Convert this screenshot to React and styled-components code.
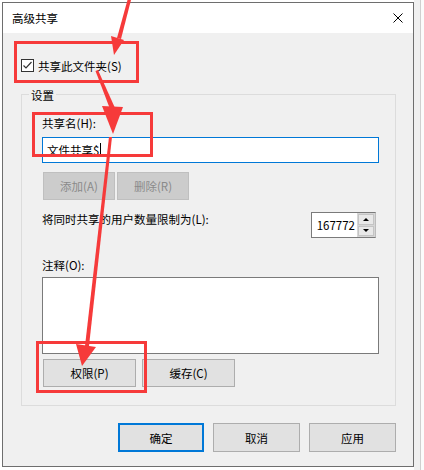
import React from "react";
import styled, { createGlobalStyle } from "styled-components";

const GlobalStyle = createGlobalStyle`
  html, body {
    margin: 0;
    padding: 0;
    background: #ffffff;
  }
  body {
    font-family: "Noto Sans CJK SC", "Noto Sans", sans-serif;
    font-size: 11.5px;
    color: #000;
  }
`;

const Page = styled.div`
  position: relative;
  width: 424px;
  height: 470px;
  display: flex;
  padding: 2px 0 0 2px;
  box-sizing: border-box;
  overflow: hidden;
`;

const Window = styled.div`
  width: 412px;
  border: 1px solid #6e6e6e;
  background: #f0f0f0;
  display: flex;
  flex-direction: column;
  align-self: flex-start;
  box-sizing: border-box;
`;

const SidePane = styled.div`
  flex: 1;
  margin-top: -2px;
  padding-left: 6px;
  background: #f0f0f0;
  display: flex;
`;

const SideStrip = styled.div`
  flex: 1;
  border-left: 1px solid #cfcfcf;
  background: #fbfbfb;
`;

const TitleBar = styled.div`
  height: 30px;
  background: #ffffff;
  display: flex;
  align-items: center;
  justify-content: space-between;
  padding: 0 10px 0 9px;
`;

const Title = styled.span`
  line-height: 16px;
`;

const Body = styled.div`
  padding: 26px 17px 14px 18px;
  display: flex;
  flex-direction: column;
`;

const CheckRow = styled.label`
  display: flex;
  align-items: center;
  height: 13px;
  gap: 4px;
  line-height: 16px;
`;

const CheckBox = styled.span`
  width: 13px;
  height: 13px;
  box-sizing: border-box;
  border: 1px solid #333;
  background: #fff;
  display: flex;
  align-items: center;
  justify-content: center;
`;

const GroupBox = styled.div`
  margin-top: 22px;
  border: 1px solid #dcdcdc;
  display: flex;
  flex-direction: column;
`;

const Legend = styled.span`
  align-self: flex-start;
  margin: -8px 0 0 7px;
  padding: 0 2px;
  line-height: 16px;
  background: #f0f0f0;
`;

const GroupInner = styled.div`
  padding: 12px 16px 18px 20px;
  display: flex;
  flex-direction: column;
`;

const FieldLabel = styled.div`
  line-height: 16px;
  margin-top: ${(p) => p.$gap || 0}px;
`;

const TextBox = styled.div`
  margin-top: 6px;
  height: 26px;
  box-sizing: border-box;
  border: 1px solid #0078d7;
  background: #fff;
  display: flex;
  align-items: center;
  padding-left: 4px;
`;

const Caret = styled.span`
  display: inline-block;
  width: 1px;
  height: 14px;
  margin-left: 1px;
  background: #000;
`;

const ButtonRow = styled.div`
  display: flex;
  gap: ${(p) => p.$gap}px;
  margin-top: ${(p) => p.$top}px;
  justify-content: ${(p) => (p.$end ? "flex-end" : "flex-start")};
`;

const Button = styled.div`
  width: ${(p) => p.$w}px;
  height: ${(p) => p.$h || 28}px;
  box-sizing: border-box;
  display: flex;
  align-items: center;
  justify-content: center;
  margin-left: ${(p) => p.$ml || 0}px;
  background: ${(p) => (p.$disabled ? "#cccccc" : "#e1e1e1")};
  border: ${(p) =>
    p.$default
      ? "2px solid #0078d7"
      : p.$disabled
      ? "1px solid #bfbfbf"
      : "1px solid #adadad"};
  color: ${(p) => (p.$disabled ? "#8a8a8a" : "#000")};
  line-height: 16px;
`;

const LimitRow = styled.div`
  margin-top: 12px;
  display: flex;
  justify-content: space-between;
  align-items: flex-start;
`;

const LimitLabel = styled.span`
  line-height: 14px;
`;

const Spin = styled.div`
  margin-right: 3px;
  width: 65px;
  height: 26px;
  box-sizing: border-box;
  border: 1px solid #7a7a7a;
  border-right-color: #bcbcbc;
  background: #fff;
  display: flex;
`;

const SpinValue = styled.span`
  flex: 1;
  display: flex;
  align-items: center;
  justify-content: flex-end;
  padding-right: 2px;
  line-height: 16px;
`;

const SpinButtons = styled.div`
  width: 16px;
  display: flex;
  flex-direction: column;
  gap: 1px;
  padding: 1px;
  background: #d6d6d6;
`;

const SpinButton = styled.div`
  flex: 1;
  background: #e8e8e8;
  border: 1px solid #c4c4c4;
  display: flex;
  align-items: center;
  justify-content: center;
`;

const Arrow = styled.span`
  width: 0;
  height: 0;
  border-left: 3px solid transparent;
  border-right: 3px solid transparent;
  ${(p) =>
    p.$up ? "border-bottom: 3px solid #000;" : "border-top: 3px solid #000;"}
`;

const TextArea = styled.div`
  margin-top: 4px;
  height: 77px;
  box-sizing: border-box;
  border: 1px solid #7a7a7a;
  background: #fff;
`;

const Markup = styled.svg`
  position: absolute;
  left: 0;
  top: 0;
  pointer-events: none;
`;

const RED = "#f63a3a";

// annotation layer: red frames and arrows drawn over the dialog
function Annotations() {
  return (
    <Markup width="424" height="470" viewBox="0 0 424 470">
      <g fill="none" stroke={RED} strokeWidth="3">
        <rect x="15.5" y="42.5" width="122" height="39" />
        <rect x="33.5" y="113.5" width="118" height="42" />
        <rect x="37.5" y="342.5" width="108" height="49" />
      </g>
      <g fill={RED}>
        <polygon points="127.5,0 131,0 121,39 117,38" />
        <polygon points="111,36 124,40 114,55" />
        <polygon points="95.5,71 98,70 115,108 110,109" />
        <polygon points="102,106 123,107 113,134" />
        <polygon points="109,137 112,137 89,346 85,346" />
        <polygon points="76,344 96,347 82,366" />
      </g>
    </Markup>
  );
}

export default function App() {
  return (
    <Page>
      <GlobalStyle />
      <Window>
        <TitleBar>
          <Title>高级共享</Title>
          <svg width="10" height="10" viewBox="0 0 10 10">
            <path d="M0.5 0.5 L9.5 9.5 M9.5 0.5 L0.5 9.5" stroke="#000" strokeWidth="1" />
          </svg>
        </TitleBar>
        <Body>
          <CheckRow>
            <CheckBox>
              <svg width="11" height="11" viewBox="0 0 11 11">
                <polyline points="1.5,5.5 4,8 9.5,2" fill="none" stroke="#333" strokeWidth="1.2" />
              </svg>
            </CheckBox>
            共享此文件夹(S)
          </CheckRow>
          <GroupBox>
            <Legend>设置</Legend>
            <GroupInner>
              <FieldLabel>共享名(H):</FieldLabel>
              <TextBox>
                文件共享$
                <Caret />
              </TextBox>
              <ButtonRow $gap={2} $top={9}>
                <Button $w={72} $ml={1} $disabled>
                  添加(A)
                </Button>
                <Button $w={72} $disabled>
                  删除(R)
                </Button>
              </ButtonRow>
              <LimitRow>
                <LimitLabel>将同时共享的用户数量限制为(L):</LimitLabel>
                <Spin>
                  <SpinValue>167772</SpinValue>
                  <SpinButtons>
                    <SpinButton>
                      <Arrow $up />
                    </SpinButton>
                    <SpinButton>
                      <Arrow />
                    </SpinButton>
                  </SpinButtons>
                </Spin>
              </LimitRow>
              <FieldLabel $gap={19}>注释(O):</FieldLabel>
              <TextArea />
              <ButtonRow $gap={6} $top={5}>
                <Button $w={93} $ml={1}>
                  权限(P)
                </Button>
                <Button $w={93}>缓存(C)</Button>
              </ButtonRow>
            </GroupInner>
          </GroupBox>
          <ButtonRow $gap={9} $top={17} $end>
            <Button $w={86} $h={29} $default>
              确定
            </Button>
            <Button $w={87} $h={29}>
              取消
            </Button>
            <Button $w={87} $h={29}>
              应用
            </Button>
          </ButtonRow>
        </Body>
      </Window>
      <SidePane>
        <SideStrip />
      </SidePane>
      <Annotations />
    </Page>
  );
}
